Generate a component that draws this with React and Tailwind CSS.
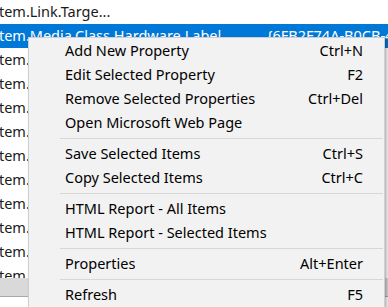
const FILAS = [
  "Item.Link.Targe...",
  "Item.Media.Class.Hardware.Label",
  "Item.Name",
  "Item.Type",
  "Item.Size",
  "Item.Date",
  "Item.Path",
  "Item.Folder",
  "Item.Owner",
  "Item.Kind",
  "Item.Url",
  "Item.Mode",
];

const MENU = [
  { texto: "Add New Property", atajo: "Ctrl+N" },
  { texto: "Edit Selected Property", atajo: "F2" },
  { texto: "Remove Selected Properties", atajo: "Ctrl+Del" },
  { texto: "Open Microsoft Web Page" },
  null,
  { texto: "Save Selected Items", atajo: "Ctrl+S" },
  { texto: "Copy Selected Items", atajo: "Ctrl+C" },
  null,
  { texto: "HTML Report - All Items" },
  { texto: "HTML Report - Selected Items" },
  null,
  { texto: "Properties", atajo: "Alt+Enter" },
  null,
  { texto: "Refresh", atajo: "F5" },
];

export default function App() {
  return (
    <div className="relative h-[307px] w-[388px] overflow-hidden bg-white font-['Noto_Sans',sans-serif] text-[14.5px] text-[#1a1a1a]">
      {/* lista de fondo */}
      <div className="flex h-[278px] flex-col overflow-hidden">
        {FILAS.map((f, i) => (
          <div
            key={i}
            className={
              "flex h-[24px] shrink-0 items-center overflow-hidden whitespace-nowrap " +
              (i === 1 ? "bg-[#0078d7] text-white" : "")
            }
          >
            <span className={"-ml-[6px] " + (i === 1 ? "w-[273px] shrink-0 overflow-hidden" : "")}>{f}</span>
            {i === 1 && <span className="shrink-0">{"{6FB2F74A-B0CB-4"}</span>}
          </div>
        ))}
      </div>
      <div className="h-[19px] border-b border-[#a8a8a8] bg-[#d9d9d9]" />

      {/* menú contextual */}
      <div className="absolute left-[28px] top-[37px] w-[357px] border border-[#cfcfcf] bg-[#f2f2f2] pt-[1px] shadow-[2px_2px_3px_rgba(0,0,0,0.3)]">
        {MENU.map((m, i) =>
          m ? (
            <div key={i} className="flex h-[24px] items-center justify-between pl-[36px] pr-[21px] text-black">
              <span>{m.texto}</span>
              {m.atajo && <span>{m.atajo}</span>}
            </div>
          ) : (
            <div key={i} className="ml-[31px] mr-[1px] my-[3px] h-px bg-[#d7d7d7]" />
          )
        )}
      </div>
    </div>
  );
}
